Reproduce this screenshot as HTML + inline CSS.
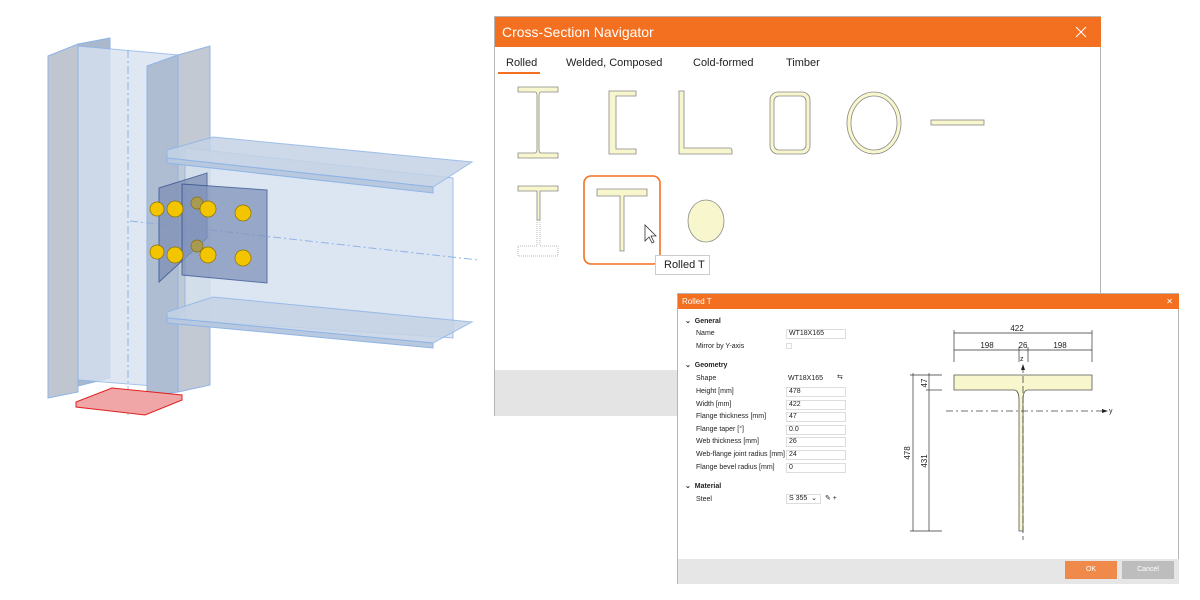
<!DOCTYPE html>
<html><head><meta charset="utf-8"><style>
*{margin:0;padding:0;box-sizing:border-box}
body{width:1200px;height:600px;background:#fff;position:relative;overflow:hidden;font-family:"Liberation Sans",sans-serif}
.abs{position:absolute}
.t{position:absolute;font-size:7px;color:#222;white-space:nowrap}
.in{position:absolute;left:786px;width:60px;height:10px;border:1px solid #ddd;font-size:7px;padding-left:2px;line-height:8px;color:#222}
.h{position:absolute;font-size:7px;font-weight:bold;color:#222}
</style></head><body>
<svg class="abs" style="left:0;top:0" width="1200" height="600">
<g stroke="#8fb4e6" stroke-width="1">
<polygon points="48,56 78,44 78,392 48,398" fill="#c0c6cf"/>
<polygon points="78,44 110,38 110,378 78,386" fill="#aab8cc"/>
<polygon points="78,46 178,55 178,388 78,380" fill="#d6e2f0" opacity="0.8"/>
<polygon points="147,66 178,55 178,392 147,396" fill="#aebdd2"/>
<polygon points="178,55 210,46 210,385 178,392" fill="#c3c9d2"/>
<line x1="128" y1="50" x2="128" y2="415" stroke-dasharray="8,3,2,3"/>
<polygon points="185,148 453,178 453,338 185,320" fill="#d6e2f0" opacity="0.85"/>
<polygon points="167,150 213,137 472,162 433,187 167,158" fill="#c5d3e6" opacity="0.85"/>
<polygon points="167,158 433,187 433,193 167,163" fill="#b7c8df"/>
<polygon points="167,312 213,297 472,322 433,343 167,318" fill="#c5d3e6" opacity="0.85"/>
<polygon points="167,318 433,343 433,348 167,323" fill="#b7c8df"/>
<line x1="130" y1="221" x2="478" y2="260" stroke-dasharray="8,3,2,3"/>
</g>
<g stroke="#2b4a8a" stroke-width="1">
<polygon points="159,188 207,173 207,238 159,282" fill="#7d8fb5" opacity="0.75"/>
<polygon points="182,184 267,190 267,283 182,275" fill="#8092ba" opacity="0.75"/>
</g>
<g fill="#f2c500" stroke="#8a7000" stroke-width="0.7">
<circle cx="157" cy="209" r="7"/><circle cx="157" cy="252" r="7"/>
<circle cx="197" cy="203" r="6" fill="#a89a50"/><circle cx="197" cy="246" r="6" fill="#a89a50"/>
<circle cx="175" cy="209" r="8"/><circle cx="175" cy="255" r="8"/>
<circle cx="208" cy="209" r="8"/><circle cx="208" cy="255" r="8"/>
<circle cx="243" cy="213" r="8"/><circle cx="243" cy="258" r="8"/>
</g>
<polygon points="76,402 112,388 182,395 182,400 145,415 76,407" fill="#f0a6a6" stroke="#e02020" stroke-width="1"/>
</svg>

<div class="abs" style="left:494px;top:16px;width:607px;height:400px;border:1px solid #b5b5b5;background:#fff">
<div class="abs" style="left:0;top:0;width:606px;height:30px;background:#f37021;color:#fff;font-size:14px;line-height:30px;padding-left:7px">Cross-Section Navigator</div>
<svg class="abs" style="left:580px;top:9px" width="12" height="12"><path d="M1,1 L11,11 M11,1 L1,11" stroke="#fff" stroke-width="1"/></svg>
<div class="abs" style="left:11px;top:40px;font-size:11px;color:#222">Rolled</div>
<div class="abs" style="left:3px;top:55px;width:42px;height:2px;background:#f37021"></div>
<div class="abs" style="left:71px;top:40px;font-size:11px;color:#222">Welded, Composed</div>
<div class="abs" style="left:198px;top:40px;font-size:11px;color:#222">Cold-formed</div>
<div class="abs" style="left:291px;top:40px;font-size:11px;color:#222">Timber</div>
<div class="abs" style="left:0;top:353px;width:606px;height:46px;background:#e4e4e4"></div>
</div>
<svg class="abs" style="left:494px;top:14px" width="610" height="280">
<g fill="#f8f6cc" stroke="#888" stroke-width="0.8">
<path d="M24,73 H64 V78 H47 Q45,78 45,82 V135 Q45,139 47,139 H64 V144 H24 V139 H41 Q43,139 43,135 V82 Q43,78 41,78 H24Z"/>
<path d="M115,77 H142 V82 H122 V135 H142 V140 H115Z"/>
<path d="M185,77 H190 V134 H236 Q238,134 238,137 V140 H185Z"/>
<rect x="276" y="78" width="40" height="62" rx="8"/><rect x="280" y="82" width="32" height="54" rx="5" fill="#fff"/>
<ellipse cx="380" cy="109" rx="27" ry="31"/><ellipse cx="380" cy="109" rx="23" ry="27" fill="#fff"/>
<rect x="437" y="106" width="53" height="5"/>
<path d="M24,172 H64 V177 H46 V206 H43 V177 H24Z"/>
<path d="M103,175 H153 V182 H130 V237 H126 V182 H103Z"/>
<ellipse cx="212" cy="207" rx="18" ry="21"/>
</g>
<path d="M43,206 V232 H24 V242 H64 V232 H46 V206" fill="none" stroke="#bbb" stroke-dasharray="1,1"/>
<rect x="90" y="162" width="76" height="88" rx="7" fill="none" stroke="#f37021" stroke-width="1.6"/>
<path d="M151,211 L151,227 L155,223 L158,229 L160,228 L157,222 L162,222Z" fill="#fff" stroke="#333" stroke-width="0.8"/>
</svg>
<div class="abs" style="left:655px;top:255px;width:55px;height:20px;border:1px solid #ccc;background:#fff;font-size:11px;line-height:18px;padding-left:8px;color:#222">Rolled T</div>

<div class="abs" style="left:677px;top:293px;width:502px;height:291px;border:1px solid #b5b5b5;background:#fff">
<div class="abs" style="left:0;top:0;width:501px;height:15px;background:#f37021;color:#fff;font-size:8px;line-height:15px;padding-left:4px">Rolled T<span style="position:absolute;right:6px;font-size:8px">✕</span></div>
<div class="abs" style="left:0;top:265px;width:501px;height:25px;background:#e6e6e6"></div>
<div class="abs" style="left:387px;top:267px;width:52px;height:18px;background:#f08a4b;color:#fff;font-size:7px;line-height:18px;text-align:center">OK</div>
<div class="abs" style="left:444px;top:267px;width:52px;height:18px;background:#bdbdbd;color:#fff;font-size:7px;line-height:18px;text-align:center">Cancel</div>
</div>
<div class="h" style="left:685px;top:317px">⌄ &nbsp;General</div>
<div class="t" style="left:696px;top:330px">Name</div><div class="in" style="top:329px">WT18X165</div>
<div class="t" style="left:696px;top:343px">Mirror by Y-axis</div><div class="abs" style="left:786px;top:343px;width:6px;height:6px;border:1px solid #ddd"></div>
<div class="h" style="left:685px;top:361px">⌄ &nbsp;Geometry</div>
<div class="t" style="left:696px;top:375px">Shape</div><div class="t" style="left:788px;top:375px">WT18X165</div><div class="t" style="left:837px;top:373px">⇆</div>
<div class="t" style="left:696px;top:388px">Height [mm]</div><div class="in" style="top:387px">478</div>
<div class="t" style="left:696px;top:401px">Width [mm]</div><div class="in" style="top:400px">422</div>
<div class="t" style="left:696px;top:413px">Flange thickness [mm]</div><div class="in" style="top:412px">47</div>
<div class="t" style="left:696px;top:426px">Flange taper [°]</div><div class="in" style="top:425px">0.0</div>
<div class="t" style="left:696px;top:438px">Web thickness [mm]</div><div class="in" style="top:437px">26</div>
<div class="t" style="left:696px;top:451px">Web-flange joint radius [mm]</div><div class="in" style="top:450px">24</div>
<div class="t" style="left:696px;top:464px">Flange bevel radius [mm]</div><div class="in" style="top:463px">0</div>
<div class="h" style="left:685px;top:482px">⌄ &nbsp;Material</div>
<div class="t" style="left:696px;top:496px">Steel</div><div class="in" style="top:494px;width:35px">S 355 &nbsp;⌄</div><div class="t" style="left:825px;top:494px">✎ +</div>

<svg class="abs" style="left:880px;top:290px" width="310" height="300" font-family="Liberation Sans" font-size="8" fill="#222">
<g stroke="#333" stroke-width="0.7" fill="none">
<line x1="74" y1="43" x2="212" y2="43"/><line x1="74" y1="60" x2="212" y2="60"/>
<line x1="74" y1="40" x2="74" y2="72"/><line x1="212" y1="40" x2="212" y2="72"/>
<line x1="139" y1="57" x2="139" y2="72"/><line x1="148" y1="57" x2="148" y2="72"/>
<line x1="33" y1="83" x2="33" y2="241"/><line x1="49" y1="83" x2="49" y2="241"/>
<line x1="30" y1="85" x2="62" y2="85"/><line x1="46" y1="100" x2="62" y2="100"/><line x1="30" y1="241" x2="62" y2="241"/>
</g>
<text x="137" y="41" text-anchor="middle">422</text><text x="107" y="58" text-anchor="middle">198</text><text x="143" y="58" text-anchor="middle">26</text><text x="180" y="58" text-anchor="middle">198</text>
<text transform="translate(30,163) rotate(-90)" text-anchor="middle">478</text><text transform="translate(47,171) rotate(-90)" text-anchor="middle">431</text><text transform="translate(47,93) rotate(-90)" text-anchor="middle">47</text>
<path d="M74,85 H212 V100 H148 Q143,100 143,110 V241 H139 V110 Q139,100 134,100 H74Z" fill="#f8f6cc" stroke="#555" stroke-width="0.8"/>
<line x1="143" y1="76" x2="143" y2="250" stroke="#444" stroke-width="0.8" stroke-dasharray="7,3"/>
<line x1="66" y1="121" x2="222" y2="121" stroke="#444" stroke-width="0.8" stroke-dasharray="7,3,2,3"/>
<path d="M222,119 L228,121 L222,123Z M141,80 L143,74 L145,80Z"/>
<text x="229" y="123" font-size="7">y</text><text x="140" y="71" font-size="7">z</text>
</svg>
</body></html>
